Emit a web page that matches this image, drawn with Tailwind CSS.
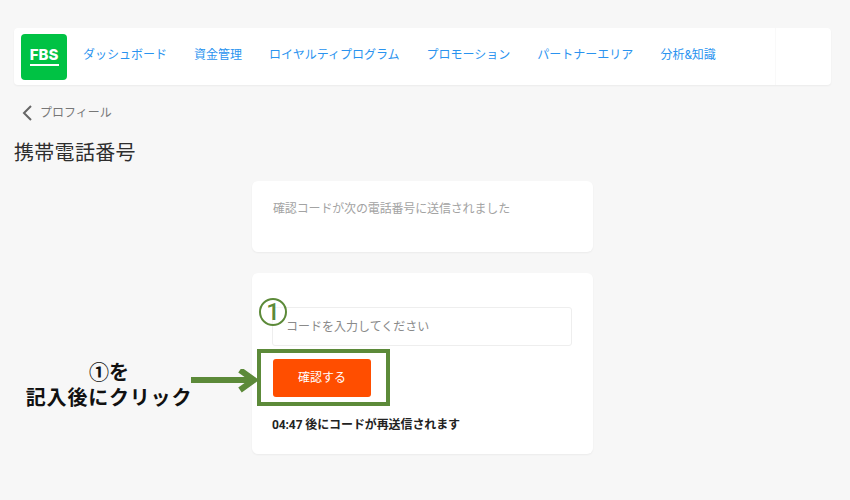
<!DOCTYPE html>
<html lang="ja"><head><meta charset="utf-8"><script src="https://cdn.jsdelivr.net/npm/@tailwindcss/browser@4"></script></head>
<body class="bg-[#f7f7f7] font-['Roboto','Noto_Sans_CJK_JP',sans-serif]">
<div class="relative w-[850px] h-[500px] overflow-hidden pt-[28px] pl-[14px]">
  <header class="w-[817px] h-[57px] bg-white rounded-[4px] shadow-[0_1px_2px_rgba(0,0,0,0.05)] flex items-center pl-[7px] relative">
    <div class="w-[46px] h-[46px] bg-[#00c244] rounded-[4px] flex flex-col items-center justify-center">
      <span class="text-white font-extrabold text-[15px] leading-[14px] font-['Inter',sans-serif]">FBS</span>
      <span class="w-[29px] h-[2px] bg-white mt-[2px]"></span>
    </div>
    <nav class="flex ml-[16px] gap-[27px] text-[12px] text-[#2a93ef] -mt-[3px]">
      <a>ダッシュボード</a><a>資金管理</a><a>ロイヤルティプログラム</a><a>プロモーション</a><a>パートナーエリア</a><a>分析&amp;知識</a>
    </nav>
    <div class="absolute right-[55px] top-0 bottom-0 w-px bg-[#f9f9f9]"></div>
  </header>
  <div class="flex items-center mt-[19px] ml-[7px] h-[18px] text-[12px] text-[#777]">
    <svg width="12" height="16" viewBox="0 0 12 16" fill="none" class="mr-[7px]"><path d="M10 1 L3 8 L10 15" stroke="#666" stroke-width="2"/></svg>
    <span>プロフィール</span>
  </div>
  <h1 class="text-[20px] leading-[28px] text-[#2e2e2e] font-normal mt-[17px] tracking-[0.3px]">携帯電話番号</h1>
  <main class="w-[341px] ml-[238px] mt-[14px] flex flex-col gap-[21px]">
    <section class="h-[71px] bg-white rounded-[6px] shadow-[0_1px_2px_rgba(0,0,0,0.05)] pt-[19px] pl-[21px] text-[12px] leading-[18px] text-[#a3a3a3] tracking-[-0.15px]">確認コードが次の電話番号に送信されました</section>
    <section class="h-[181px] bg-white rounded-[6px] shadow-[0_1px_2px_rgba(0,0,0,0.05)] pt-[34px] px-[20px]">
      <div class="w-[300px] h-[39px] border border-[#eeeeee] rounded-[3px] flex items-center pl-[13px] text-[12px] text-[#8a8a8a]">コードを入力してください</div>
      <button class="block w-[98px] h-[38px] ml-px mt-[13px] bg-[#ff4e00] rounded-[3px] text-white text-[12px]">確認する</button>
      <p class="mt-[19px] text-[12px] leading-[18px] font-bold text-[#222] tracking-[-0.1px]">04:47 後にコードが再送信されます</p>
    </section>
  </main>
  <div class="absolute left-[259px] top-[298px] w-[28px] h-[28px] rounded-full border-2 border-[#5c8a39] bg-white/40 flex items-center justify-center text-[#5c8a39] text-[24px] leading-none font-medium">1</div>
  <div class="absolute left-[257px] top-[349px] w-[133px] h-[57px] border-[4px] border-[#5c8a39]"></div>
  <div class="absolute left-[9px] top-[361px] w-[200px] text-center text-[20px] leading-[25px] font-bold text-[#111]">
    <div>①を</div>
    <div class="tracking-[0.8px]">記入後にクリック</div>
  </div>
  <svg class="absolute left-[191px] top-[369px]" width="68" height="24" viewBox="0 0 68 24" fill="none"><path d="M0 11 H64" stroke="#5c8a39" stroke-width="6"/><path d="M49 1 L63 11 L49 21" stroke="#5c8a39" stroke-width="6"/></svg>
</div>
</body></html>
